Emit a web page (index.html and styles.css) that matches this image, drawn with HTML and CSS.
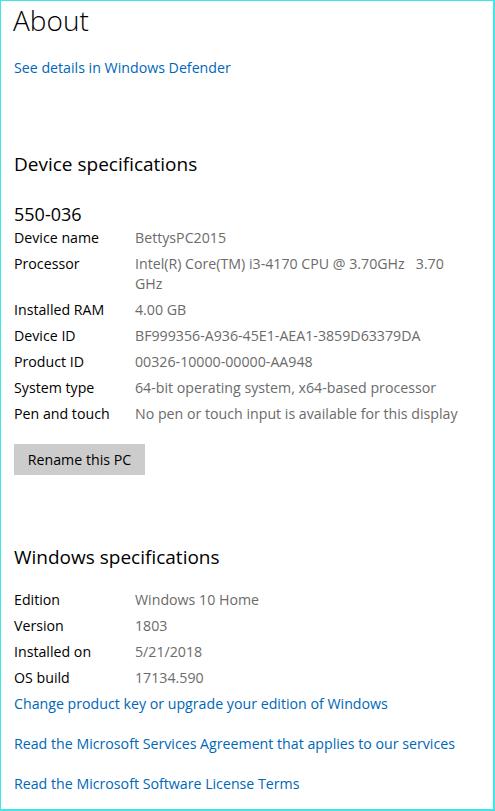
FILE: index.html
```html
<!DOCTYPE html>
<html>
<head>
<meta charset="utf-8">
<link rel="stylesheet" href="styles.css">
</head>
<body>
<div class="frame">
  <h1 class="title">About</h1>
  <a class="link link-defender" href="#">See details in Windows Defender</a>

  <h2 class="section-title section-device">Device specifications</h2>
  <div class="model">550-036</div>
  <dl class="specs">
    <div class="row"><dt>Device name</dt><dd>BettysPC2015</dd></div>
    <div class="row"><dt>Processor</dt><dd>Intel(R) Core(TM) i3-4170 CPU @ 3.70GHz&nbsp;&nbsp; 3.70 GHz</dd></div>
    <div class="row"><dt>Installed RAM</dt><dd>4.00 GB</dd></div>
    <div class="row"><dt>Device ID</dt><dd>BF999356-A936-45E1-AEA1-3859D63379DA</dd></div>
    <div class="row"><dt>Product ID</dt><dd>00326-10000-00000-AA948</dd></div>
    <div class="row"><dt>System type</dt><dd>64-bit operating system, x64-based processor</dd></div>
    <div class="row"><dt>Pen and touch</dt><dd>No pen or touch input is available for this display</dd></div>
  </dl>
  <button class="btn">Rename this PC</button>

  <h2 class="section-title section-windows">Windows specifications</h2>
  <dl class="specs">
    <div class="row"><dt>Edition</dt><dd>Windows 10 Home</dd></div>
    <div class="row"><dt>Version</dt><dd>1803</dd></div>
    <div class="row"><dt>Installed on</dt><dd>5/21/2018</dd></div>
    <div class="row"><dt>OS build</dt><dd>17134.590</dd></div>
  </dl>
  <div class="links">
    <a class="link" href="#">Change product key or upgrade your edition of Windows</a>
    <a class="link" href="#">Read the Microsoft Services Agreement that applies to our services</a>
    <a class="link" href="#">Read the Microsoft Software License Terms</a>
  </div>
</div>
</body>
</html>
```

FILE: styles.css
```css
html, body {
  margin: 0;
  padding: 0;
  background: #ffffff;
}
body {
  font-family: "Open Sans", "Noto Sans", "Liberation Sans", sans-serif;
  color: #000000;
}
.frame {
  box-sizing: border-box;
  width: 495px;
  height: 811px;
  border: 1px solid #3ee6e6;
  border-bottom-width: 2px;
  border-right-width: 2px;
  padding: 0 0 0 13px;
  overflow: hidden;
  display: flex;
  flex-direction: column;
  align-items: flex-start;
}
.title {
  margin: 0 0 0 -1px;
  font-size: 28px;
  font-weight: 300;
  line-height: 38px;
}
.link {
  color: #0067b8;
  text-decoration: none;
  font-size: 14.2px;
  line-height: 20px;
}
.link-defender {
  margin-top: 19px;
}
.section-title {
  margin: 0;
  font-size: 19px;
  font-weight: 400;
  line-height: 26px;
}
.section-device {
  margin-top: 73px;
}
.model {
  margin-top: 26px;
  font-size: 18px;
  line-height: 22px;
}
.specs {
  margin: 0;
  display: flex;
  flex-direction: column;
  align-self: stretch;
}
.row {
  display: grid;
  grid-template-columns: 121px 1fr;
  padding: 3px 0;
  font-size: 14.2px;
  line-height: 20px;
}
.row dt {
  color: #000000;
}
.row dd {
  margin: 0;
  color: #6b6b6b;
  max-width: 330px;
}
.btn {
  margin-top: 17px;
  width: 131px;
  height: 31px;
  border: none;
  background: #cccccc;
  font-family: inherit;
  font-size: 14.2px;
  color: #000000;
  padding: 0;
}
.section-windows {
  margin-top: 69px;
}
.section-windows + .specs {
  margin-top: 17px;
}
.links {
  display: flex;
  flex-direction: column;
  gap: 20px;
  margin-top: 3px;
}
```
